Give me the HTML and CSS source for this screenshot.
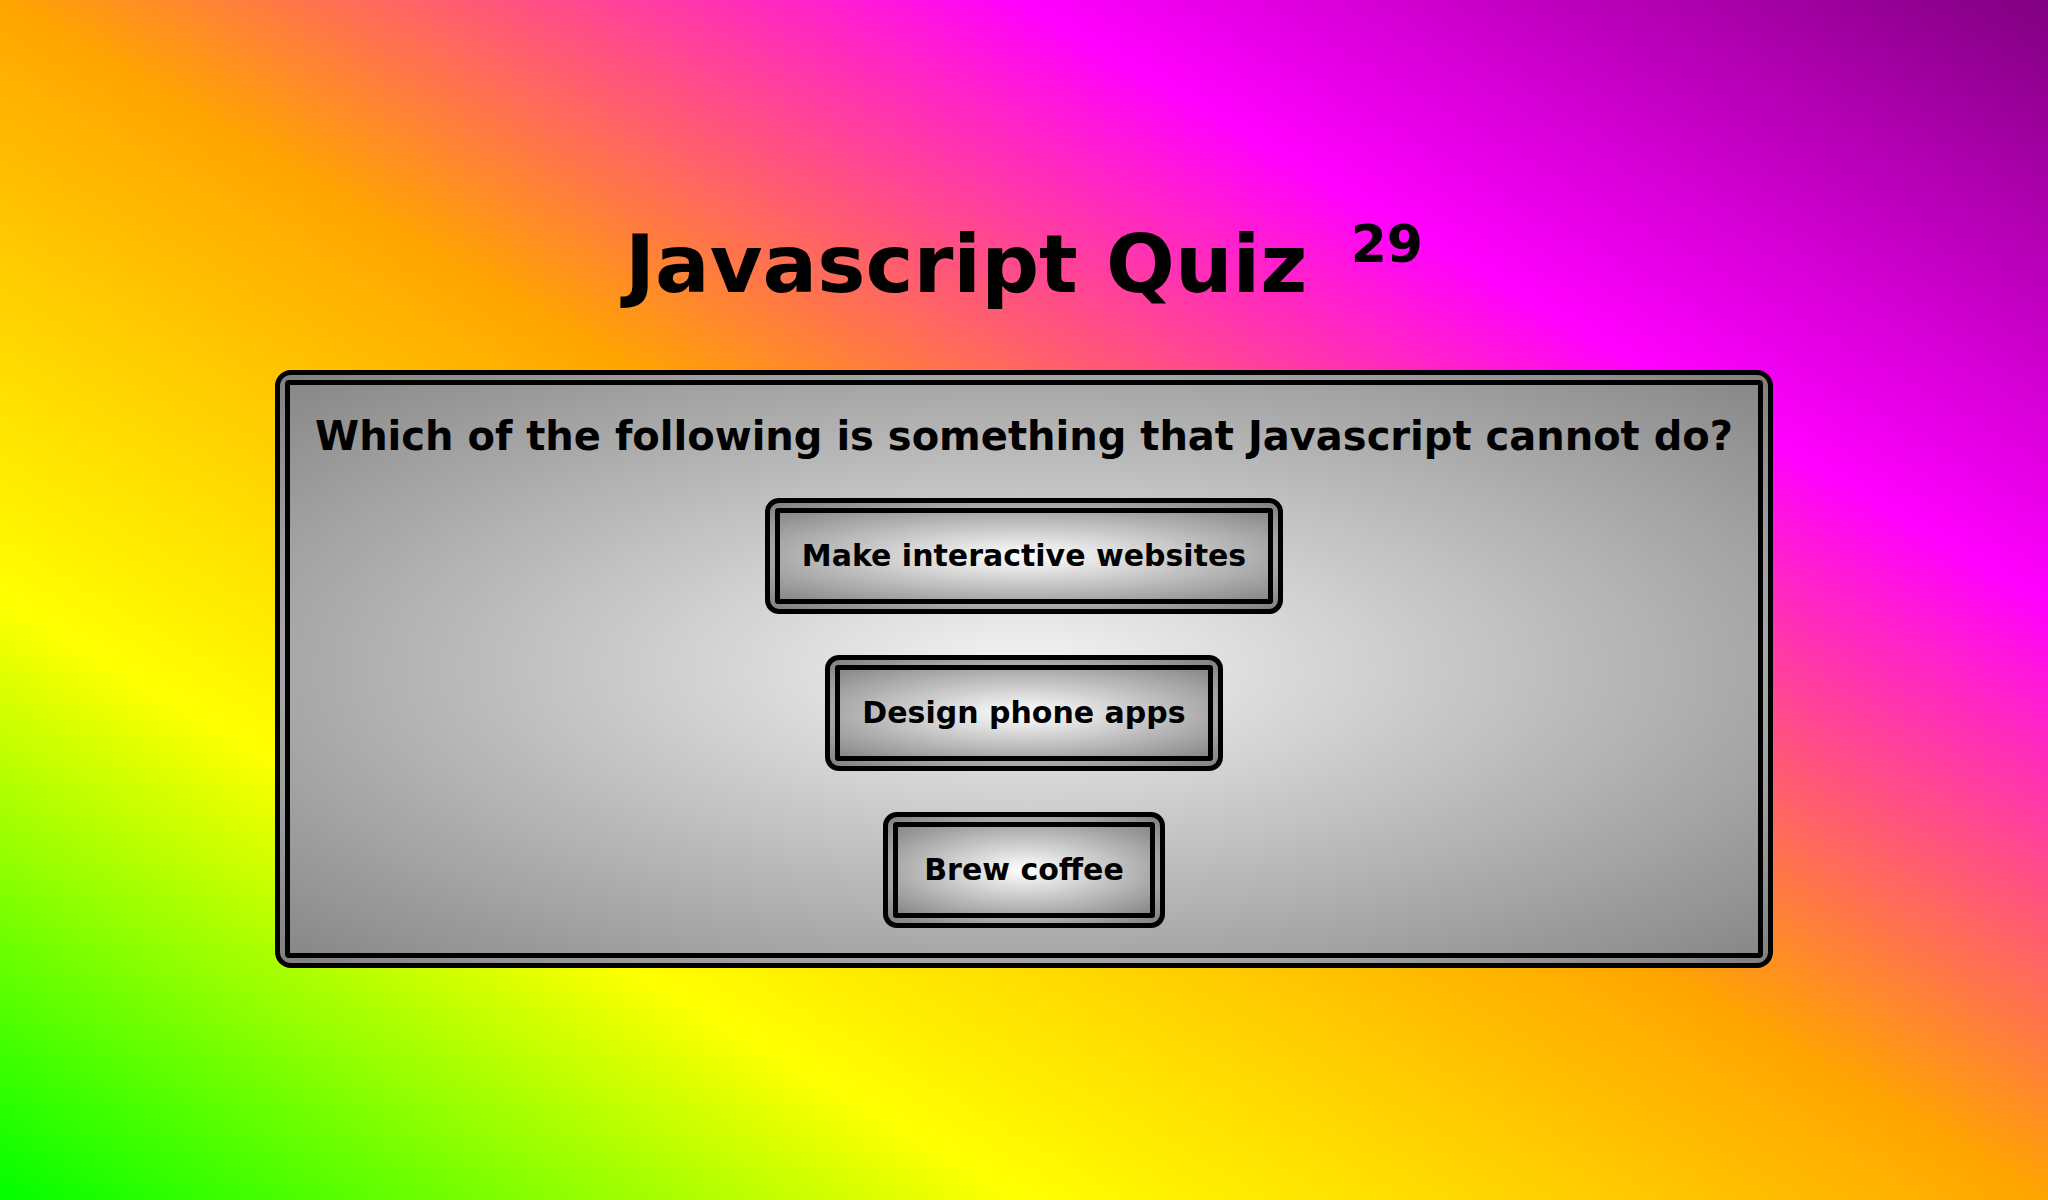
FILE: index.html
```html
<!DOCTYPE html>
<html lang="en">
<head>
<meta charset="utf-8">
<title>Javascript Quiz</title>
<link rel="stylesheet" href="styles.css">
</head>
<body>
<main class="page">
  <h1 class="title">Javascript Quiz <sup class="count">29</sup></h1>
  <section class="card">
    <div class="card-inner">
      <h2 class="question">Which of the following is something that Javascript cannot do?</h2>
      <div class="answers">
        <button class="answer" type="button"><span class="answer-inner">Make interactive websites</span></button>
        <button class="answer" type="button"><span class="answer-inner">Design phone apps</span></button>
        <button class="answer answer-wide" type="button"><span class="answer-inner">Brew coffee</span></button>
      </div>
    </div>
  </section>
</main>
</body>
</html>
```
FILE: styles.css
```css
html, body {
  margin: 0;
  padding: 0;
}

body {
  min-height: 100vh;
  background: linear-gradient(to top right, #00ff00, #ffff00, #ffa500, #ff00ff, #800080);
  font-family: "DejaVu Sans", Verdana, sans-serif;
  color: #000;
}

.page {
  display: flex;
  flex-direction: column;
  align-items: center;
  padding-top: 224px;
}

.title {
  margin: 0;
  font-size: 81px;
  line-height: 1;
  font-weight: bold;
}

.count {
  font-size: 52px;
  line-height: 0;
  vertical-align: 30px;
  margin-left: 15px;
}

.card {
  margin-top: 65px;
  border: 5px solid #000;
  border-radius: 16px;
  padding: 5px;
  background: radial-gradient(#ffffff, #808080);
}

.card-inner {
  border: 5px solid #000;
  border-radius: 4px;
  padding: 27px 25px 25px;
  background: radial-gradient(#f4f4f4, #888888);
  display: flex;
  flex-direction: column;
  align-items: center;
}

.question {
  margin: 0;
  font-size: 40px;
  line-height: 48px;
  font-weight: bold;
}

.answers {
  margin-top: 38px;
  display: flex;
  flex-direction: column;
  align-items: center;
  gap: 41px;
}

.answer {
  border: 5px solid #000;
  border-radius: 14px;
  padding: 5px;
  margin: 0;
  background: radial-gradient(#ffffff, #808080);
  font: inherit;
  cursor: pointer;
}

.answer-inner {
  display: block;
  border: 5px solid #000;
  border-radius: 3px;
  padding: 25px 22px;
  background: radial-gradient(#ffffff, #888888);
  font-family: "DejaVu Sans", Verdana, sans-serif;
  font-size: 30px;
  line-height: 36px;
  font-weight: bold;
  color: #000;
}

.answer-wide .answer-inner {
  padding-left: 26px;
  padding-right: 26px;
}
```
